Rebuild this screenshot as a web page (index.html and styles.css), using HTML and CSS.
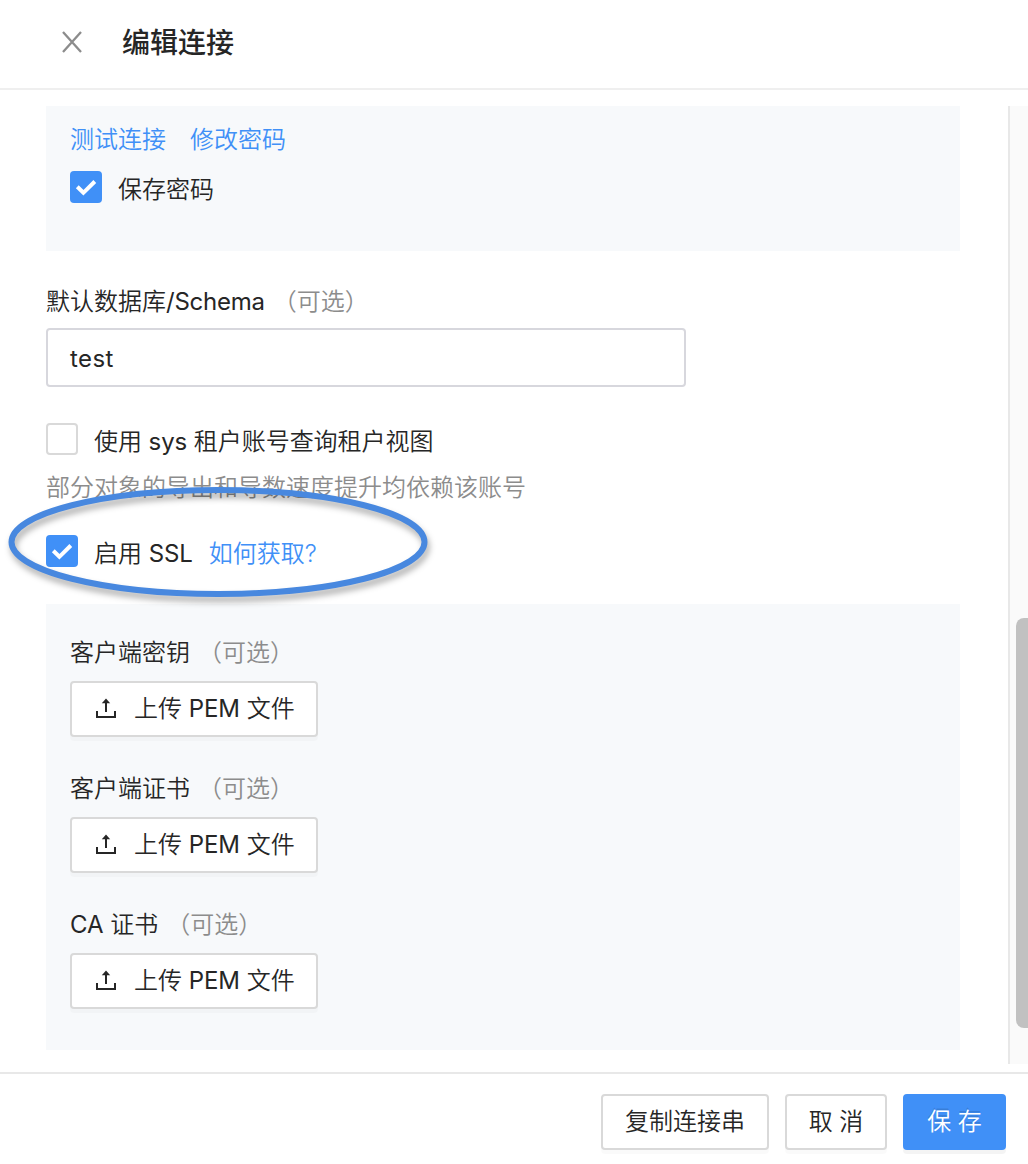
FILE: index.html
```html
<!DOCTYPE html>
<html lang="zh-CN">
<head>
<meta charset="utf-8">
<title>编辑连接</title>
<link rel="stylesheet" href="styles.css">
</head>
<body>
<svg class="defs" width="0" height="0" aria-hidden="true">
  <symbol id="upload" viewBox="0 0 22 22"><path d="M2 13v6h18v-6" fill="none" stroke="#262626" stroke-width="2"/><path d="M11 14V3" fill="none" stroke="#262626" stroke-width="2"/><path d="M11 .5l4.2 4.7H6.8z" fill="#262626"/></symbol>
  <symbol id="check" viewBox="0 0 32 32"><path d="M7.3 15.8l6.1 6L24.8 10.5" fill="none" stroke="#fff" stroke-width="4"/></symbol>
</svg>
<div class="drawer">
  <header class="header">
    <svg class="close" viewBox="0 0 22 24"><path d="M2 2l18 20M20 2L2 22" fill="none" stroke="#8c8c8c" stroke-width="2.3"/></svg>
    <h1 class="title">编辑连接</h1>
  </header>
  <div class="body">
    <main class="content">
      <section class="panel account">
        <div class="links"><a class="link">测试连接</a><a class="link">修改密码</a></div>
        <label class="check-row"><span class="box checked"><svg><use href="#check"/></svg></span><span class="check-text">保存密码</span></label>
      </section>
      <div class="label schema-label"><span class="name">默认数据库<span class="latin schema">/Schema</span></span><span class="optional">（可选）</span></div>
      <div class="input latin">test</div>
      <label class="check-row sys"><span class="box"></span><span class="check-text">使用 <span class="latin">sys</span> 租户账号查询租户视图</span></label>
      <p class="hint">部分对象的导出和导数速度提升均依赖该账号</p>
      <div class="check-row ssl">
        <span class="box checked"><svg><use href="#check"/></svg></span><span class="check-text">启用 <span class="latin">SSL</span></span><a class="link how">如何获取?</a>
        <svg class="ring" viewBox="0 0 440 130"><ellipse cx="218" cy="62" rx="206.5" ry="52" fill="none" stroke="#4888df" stroke-width="6"/></svg>
      </div>
      <section class="panel certs">
        <div class="field"><div class="label"><span class="name">客户端密钥</span><span class="optional">（可选）</span></div><button class="btn upload"><svg class="icon"><use href="#upload"/></svg><span>上传 <span class="latin">PEM</span> 文件</span></button></div>
        <div class="field"><div class="label"><span class="name">客户端证书</span><span class="optional">（可选）</span></div><button class="btn upload"><svg class="icon"><use href="#upload"/></svg><span>上传 <span class="latin">PEM</span> 文件</span></button></div>
        <div class="field"><div class="label"><span class="name"><span class="latin">CA</span> 证书</span><span class="optional">（可选）</span></div><button class="btn upload"><svg class="icon"><use href="#upload"/></svg><span>上传 <span class="latin">PEM</span> 文件</span></button></div>
      </section>
    </main>
    <div class="scrollbar"><div class="thumb"></div></div>
  </div>
  <footer class="footer">
    <button class="btn copy">复制连接串</button>
    <button class="btn cancel">取 消</button>
    <button class="btn save">保 存</button>
  </footer>
</div>
</body>
</html>
```
FILE: styles.css
```css
* { box-sizing: border-box; }
body { margin: 0; background: #fff; color: #262626; font: 350 24px/32px Inter, "Noto Sans CJK SC", sans-serif; }
.defs { position: absolute; }
.latin { font-weight: 400; letter-spacing: -.1px; }
.drawer { width: 1028px; height: 1164px; display: flex; flex-direction: column; overflow: hidden; }
.header { height: 90px; flex: none; display: flex; align-items: center; gap: 39px; padding: 0 0 4px 61px; border-bottom: 2px solid #efefef; }
.close { width: 22px; height: 24px; }
.title { margin: 0; padding-top: 2px; font-size: 28px; line-height: 40px; font-weight: 500; }
.body { height: 982px; flex: none; display: flex; justify-content: space-between; padding: 16px 0 8px; }
.content { width: 914px; margin-left: 46px; height: 944px; }
.panel { background: #f7f9fb; padding: 0 24px; }
.account { height: 145px; padding-top: 18px; }
.links { display: flex; gap: 24px; margin-bottom: 15px; }
.link { color: #4090f7; }
.check-row { display: flex; height: 32px; }
.box { width: 32px; height: 32px; flex: none; border: 2px solid #d9d9d9; border-radius: 4px; background: #fff; }
.box.checked { border: 0; background: #4090f7; }
.box svg { display: block; width: 32px; height: 32px; }
.check-text { padding: 3px 0 0 16px; white-space: nowrap; }
.label { display: flex; height: 32px; white-space: nowrap; }
.optional { color: #8c8c8c; margin-left: 8px; }
.schema { letter-spacing: -.25px; }
.schema-label { margin-top: 35px; }
.input { width: 640px; height: 59px; margin-top: 10px; border: 2px solid #d7d7dd; border-radius: 4px; padding: 13px 22px; letter-spacing: .4px; }
.sys { margin-top: 36px; }
.sys .check-text { letter-spacing: -.05px; }
.hint { margin: 17px 0 0; color: #8c8c8c; white-space: nowrap; }
.ssl { position: relative; margin-top: 31px; }
.how { padding: 3px 0 0 16px; }
.ring { position: absolute; left: -46px; top: -55px; width: 440px; height: 130px; filter: drop-shadow(2px 5px 3px rgba(0, 0, 0, .32)); }
.certs { height: 446px; margin-top: 37px; padding-top: 33px; }
.field { height: 136px; }
.btn { display: flex; align-items: center; justify-content: center; height: 56px; padding: 0; font: inherit; color: inherit; white-space: nowrap; background: #fff; border: 2px solid #d9d9d9; border-radius: 4px; box-shadow: 0 4px 0 rgba(0, 0, 0, .018); }
.upload { width: 248px; margin-top: 12px; gap: 17px; justify-content: flex-start; padding-left: 23px; }
.icon { width: 22px; height: 22px; }
.scrollbar { width: 20px; height: 958px; padding: 512px 0 0 6px; border-left: 2px solid #e8e8e8; background: #fafafa; }
.thumb { height: 410px; border-radius: 8px 0 0 8px; background: #c1c1c1; }
.footer { height: 92px; flex: none; display: flex; justify-content: flex-end; gap: 16px; padding: 20px 22px 0 0; border-top: 2px solid #e8e8e8; }
.copy { width: 168px; }
.cancel { width: 102px; }
.save { width: 103px; color: #fff; background: #4090f7; border-color: #4090f7; box-shadow: 0 4px 0 rgba(0, 0, 0, .045); text-shadow: 0 -2px 0 rgba(0, 0, 0, .12); }
```
